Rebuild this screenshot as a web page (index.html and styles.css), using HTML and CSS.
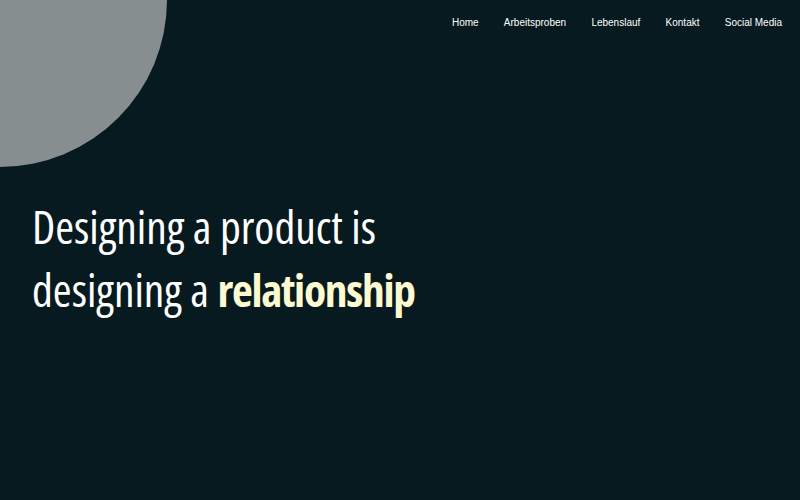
FILE: index.html
```html
<!DOCTYPE html>
<html lang="de">
<head>
<meta charset="utf-8">
<title>Portfolio</title>
<link rel="stylesheet" href="styles.css">
</head>
<body>
<div class="page">
  <div class="blob"></div>
  <header class="topbar">
    <nav class="nav">
      <a href="#">Home</a>
      <a href="#">Arbeitsproben</a>
      <a href="#">Lebenslauf</a>
      <a href="#">Kontakt</a>
      <a href="#">Social Media</a>
    </nav>
  </header>
  <main class="hero">
    <h1 class="title">Designing a product is<br>designing a <strong class="accent">relationship</strong></h1>
  </main>
</div>
</body>
</html>
```
FILE: styles.css
```css
html, body {
  margin: 0;
  padding: 0;
  background: #071a1f;
}
.page {
  position: relative;
  width: 800px;
  height: 500px;
  overflow: hidden;
  background: #071a1f;
}
.blob {
  position: absolute;
  left: -167px;
  top: -167px;
  width: 334px;
  height: 334px;
  border-radius: 50%;
  background: #878e90;
}
.topbar {
  position: relative;
  display: flex;
  justify-content: flex-end;
  padding: 17px 18px 0 0;
}
.nav {
  display: flex;
  gap: 25.25px;
}
.nav a {
  font-family: "Liberation Sans", Arial, sans-serif;
  font-size: 10px;
  line-height: 12px;
  color: #ffffff;
  text-decoration: none;
}
.hero {
  position: relative;
  padding: 0 0 0 32px;
  margin-top: 166px;
}
.title {
  margin: 0;
  font-family: "Open Sans", sans-serif;
  font-stretch: 75%;
  font-weight: 400;
  font-size: 45.5px;
  line-height: 63px;
  color: #ffffff;
  white-space: nowrap;
}
.accent {
  font-weight: 700;
  letter-spacing: -1.3px;
  color: #fdf9d0;
}
```
